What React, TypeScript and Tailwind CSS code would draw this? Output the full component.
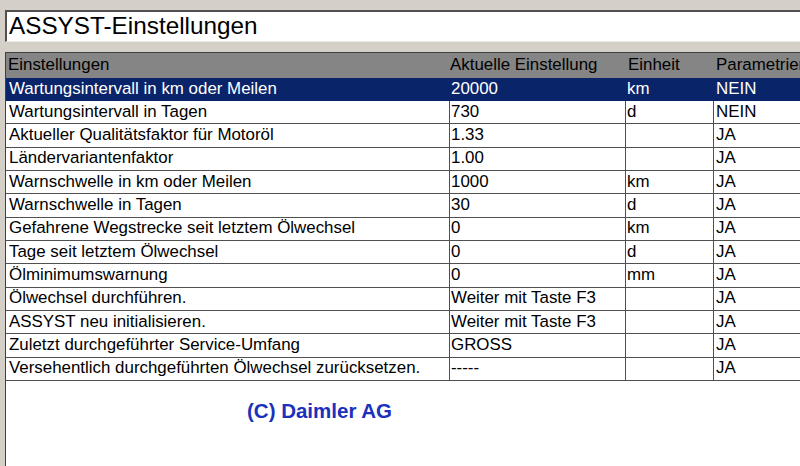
import React from "react";

type Row = [string, string, string, string];

const rows: Row[] = [
  ["Wartungsintervall in Tagen", "730", "d", "NEIN"],
  ["Aktueller Qualitätsfaktor für Motoröl", "1.33", "", "JA"],
  ["Ländervariantenfaktor", "1.00", "", "JA"],
  ["Warnschwelle in km oder Meilen", "1000", "km", "JA"],
  ["Warnschwelle in Tagen", "30", "d", "JA"],
  ["Gefahrene Wegstrecke seit letztem Ölwechsel", "0", "km", "JA"],
  ["Tage seit letztem Ölwechsel", "0", "d", "JA"],
  ["Ölminimumswarnung", "0", "mm", "JA"],
  ["Ölwechsel durchführen.", "Weiter mit Taste F3", "", "JA"],
  ["ASSYST neu initialisieren.", "Weiter mit Taste F3", "", "JA"],
  ["Zuletzt durchgeführter Service-Umfang", "GROSS", "", "JA"],
  ["Versehentlich durchgeführten Ölwechsel zurücksetzen.", "-----", "", "JA"],
];

export default function App() {
  return (
    <div className="w-[800px] h-[466px] bg-[#d4d0c8] overflow-hidden flex flex-col font-['Liberation_Sans',Arial,sans-serif] text-black">
      <div className="pt-[10px] pl-[5px]">
        <div className="h-[32px] bg-white border-t-2 border-l-2 border-t-[#505050] border-l-[#505050] border-b border-b-[#ece9e2] flex items-center pl-[2px] text-[24.3px] leading-none whitespace-nowrap">
          ASSYST-Einstellungen
        </div>
      </div>
      <div className="mt-[10px] ml-[5px] flex-1 bg-white border-t border-l border-[#404040] overflow-hidden text-[16.9px] leading-none">
        <div className="grid grid-cols-[444px_176px_88px_1fr] h-[25px] bg-[#858585] items-center whitespace-nowrap">
          <div className="pl-[2px]">Einstellungen</div>
          <div className="pl-[0px]">Aktuelle Einstellung</div>
          <div className="pl-[2px]">Einheit</div>
          <div className="pl-[2px]">Parametrier</div>
        </div>
        <div className="grid grid-cols-[444px_176px_88px_1fr] h-[23px] bg-[#0a246a] text-white items-center whitespace-nowrap">
          <div className="pl-[3px]">Wartungsintervall in km oder Meilen</div>
          <div className="pl-[1px]">20000</div>
          <div className="pl-[1px]">km</div>
          <div className="pl-[2px]">NEIN</div>
        </div>
        {rows.map((r, i) => (
          <div
            key={i}
            className="grid grid-cols-[444px_176px_88px_1fr] h-[23.33px] border-b border-[#505050] whitespace-nowrap"
          >
            <div className="pl-[3px] border-r border-[#505050] flex items-center">{r[0]}</div>
            <div className="pl-[1px] border-r border-[#505050] flex items-center">{r[1]}</div>
            <div className="pl-[1px] border-r border-[#505050] flex items-center">{r[2]}</div>
            <div className="pl-[2px] flex items-center">{r[3]}</div>
          </div>
        ))}
        <div className="pt-[20px] pl-[241px] text-[20.5px] font-bold text-[#1b30bd] leading-none">
          (C) Daimler AG
        </div>
      </div>
    </div>
  );
}
